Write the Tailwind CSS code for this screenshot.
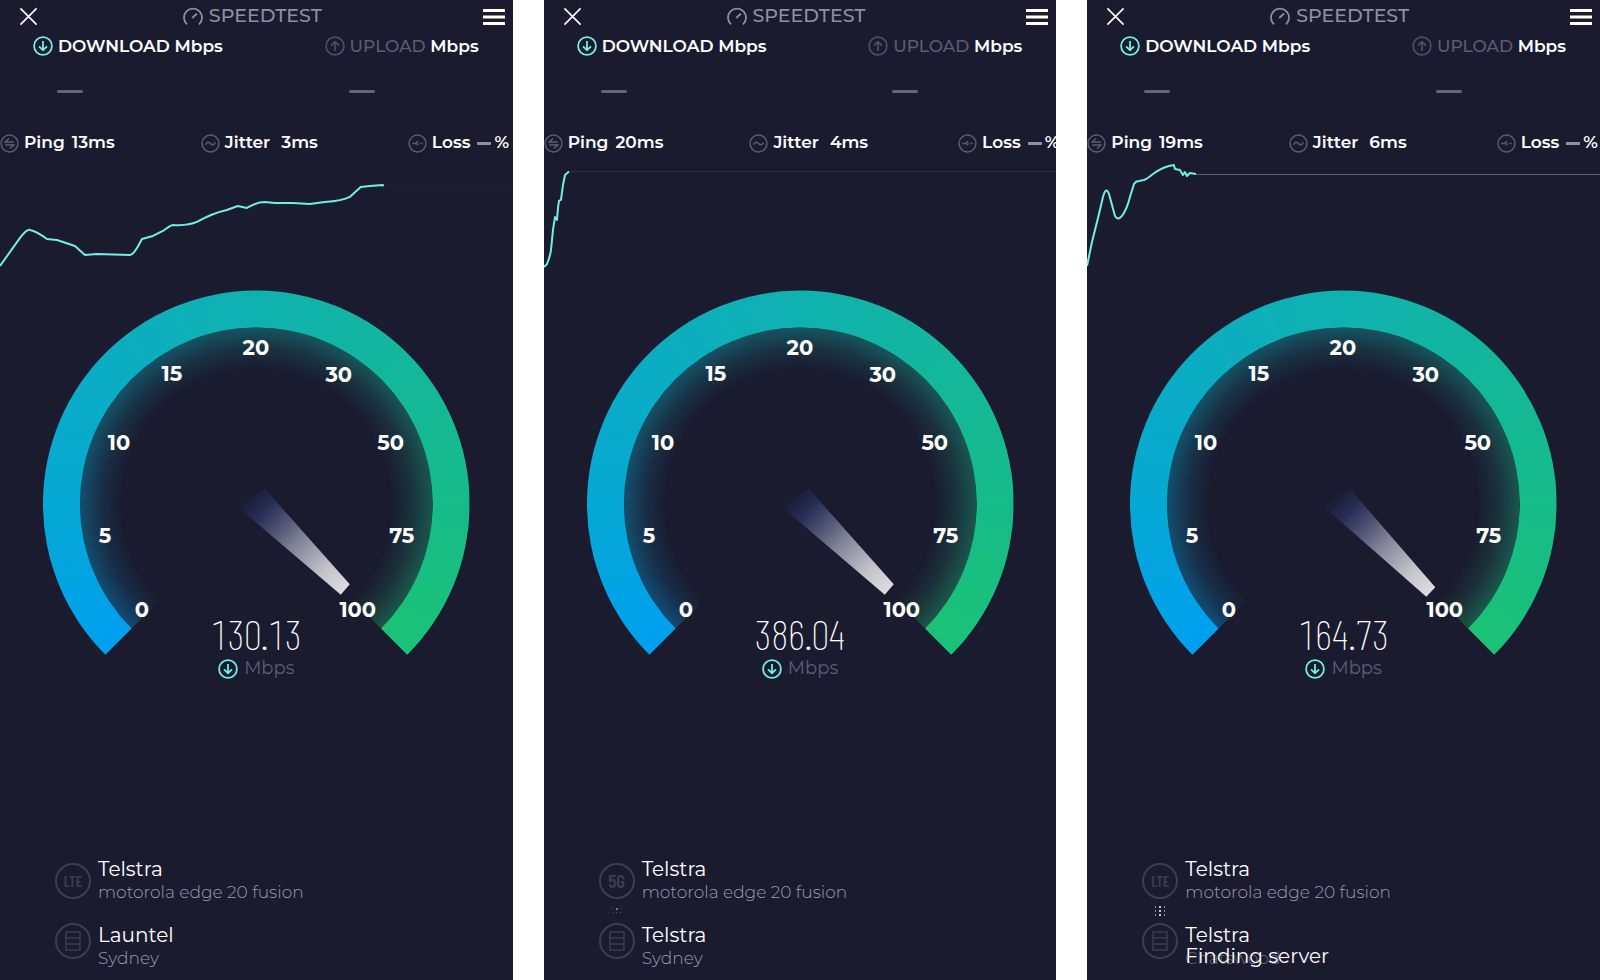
<!DOCTYPE html>
<html lang="en">

<head>
    <meta charset="UTF-8">
    <meta name="viewport" content="width=device-width, initial-scale=1.0">
    <title>Speedtest</title>
    <script src="https://cdn.jsdelivr.net/npm/@tailwindcss/browser@4"></script>
</head>

<body class="bg-white font-['Montserrat','Inter',sans-serif]">
    <!-- Shared icons and gradients -->
    <svg class="absolute size-0" aria-hidden="true">
        <defs>
            <linearGradient id="needleFill" gradientUnits="userSpaceOnUse" x1="246" y1="493" x2="346" y2="590">
                <stop offset="0" stop-color="#222a55" stop-opacity="0" />
                <stop offset="0.18" stop-color="#2a3360" stop-opacity="0.8" />
                <stop offset="0.5" stop-color="#7d7f95" />
                <stop offset="0.8" stop-color="#c4c4cc" />
                <stop offset="1" stop-color="#dcdce0" />
            </linearGradient>
            <clipPath id="ringClip">
                <path d="M105.5 655A213.5 213.5 0 1 1 407.5 655L381.3 628.8A176.5 176.5 0 1 0 131.7 628.8Z" />
            </clipPath>
            <clipPath id="glowClip">
                <path d="M256.5 504L131.7 628.8A176.5 176.5 0 1 1 381.3 628.8Z" />
            </clipPath>
            <g id="ticks" fill="#fff" font-size="21" font-weight="700" text-anchor="middle">
                <text x="142" y="617">0</text>
                <text x="105" y="543">5</text>
                <text x="119" y="450">10</text>
                <text x="172" y="381">15</text>
                <text x="256" y="355">20</text>
                <text x="339" y="382">30</text>
                <text x="391" y="450">50</text>
                <text x="402" y="543">75</text>
                <text x="358" y="617">100</text>
            </g>
        </defs>
        <symbol id="close" viewBox="0 0 20 20">
            <path d="M1.500 1.500L18.500 18.500M18.500 1.500L1.500 18.500" fill="none" stroke="currentColor" stroke-width="1.700" />
        </symbol>
        <symbol id="menu" viewBox="0 0 22 16">
            <path d="M0 1.500H22M0 8H22M0 14.500H22" fill="none" stroke="currentColor" stroke-width="2.800" />
        </symbol>
        <symbol id="logo" viewBox="0 0 20 20">
            <path d="M4 17.300A9 9 0 1 1 16 17.300M9.300 11L14 6.500" fill="none" stroke="currentColor" stroke-width="1.800" />
        </symbol>
        <symbol id="down" viewBox="0 0 20 20">
            <circle cx="10" cy="10" r="8.900" fill="none" stroke="currentColor" stroke-width="1.800" />
            <path d="M10 5V14M6 10.300L10 14.200L14 10.300" fill="none" stroke="currentColor" stroke-width="1.800" />
        </symbol>
        <symbol id="up" viewBox="0 0 20 20">
            <circle cx="10" cy="10" r="8.900" fill="none" stroke="currentColor" stroke-width="1.700" />
            <path d="M10 15V6M6 9.700L10 5.800L14 9.700" fill="none" stroke="currentColor" stroke-width="1.700" />
        </symbol>
        <symbol id="ping" viewBox="0 0 20 20">
            <circle cx="10" cy="10" r="8.900" fill="none" stroke="currentColor" stroke-width="1.500" />
            <path d="M14.500 8.500H5.500L9.500 4.800M5.500 11.500H14.500L10.500 15.200" fill="none" stroke="currentColor" stroke-width="1.500" />
        </symbol>
        <symbol id="jitter" viewBox="0 0 20 20">
            <circle cx="10" cy="10" r="8.900" fill="none" stroke="currentColor" stroke-width="1.500" />
            <path d="M4.800 11.300C6.500 7.800 8.300 8.200 10 10S13.500 12.200 15.200 8.700" fill="none" stroke="currentColor" stroke-width="1.500" />
        </symbol>
        <symbol id="loss" viewBox="0 0 20 20">
            <circle cx="10" cy="10" r="8.900" fill="none" stroke="currentColor" stroke-width="1.500" />
            <path d="M4.500 10H8L10.500 7.500M9.200 12L10.800 10M12.200 10H13.200M14.200 10H15.700" fill="none" stroke="currentColor" stroke-width="1.500" />
        </symbol>
        <symbol id="server" viewBox="0 0 16 20">
            <path d="M1 1H15V19H1ZM1 7H15M1 13H15" fill="none" stroke="currentColor" stroke-width="1.400" />
        </symbol>
    </svg>

    <main class="grid min-h-screen grid-cols-3 gap-[31px]">
        <!-- Test 1 -->
        <section class="flex min-w-0 flex-col overflow-hidden bg-[#1b1b2f] text-white">
            <header class="flex h-[33px] items-center justify-between pr-2 pl-[19px]">
                <button type="button" aria-label="Close"><svg class="size-[19px]"><use href="#close" /></svg></button>
                <h1 class="mr-4 flex items-center gap-[6px] text-[19px] font-medium text-[#8f8fa3]"><svg class="size-5"><use href="#logo" /></svg>SPEEDTEST</h1>
                <button type="button" aria-label="Menu"><svg class="h-4 w-[22px]"><use href="#menu" /></svg></button>
            </header>
            <div class="flex h-[98px] justify-between pr-[34px] pl-[33px] text-[17px] leading-[26px] font-semibold">
                <div>
                    <div class="flex items-center gap-[5px]"><svg class="size-5 text-[#72efe0]"><use href="#down" /></svg>DOWNLOAD Mbps</div>
                    <div class="mt-[31px] ml-6 h-[3px] w-[26px] rounded-full bg-[#65657a]"></div>
                </div>
                <div>
                    <div class="flex items-center gap-[5px]"><svg class="size-5 text-[#4e4e63]"><use href="#up" /></svg><span><span class="font-medium text-[#5d5d72]">UPLOAD</span> Mbps</span></div>
                    <div class="mt-[31px] ml-6 h-[3px] w-[26px] rounded-full bg-[#65657a]"></div>
                </div>
            </div>
            <div class="flex h-6 items-center text-[17px] font-semibold whitespace-nowrap">
                <div class="flex shrink-0 items-center"><svg class="mr-[5px] size-[19px] text-[#5d5d72]"><use href="#ping" /></svg>Ping<span class="ml-[7px]">13ms</span></div>
                <div class="ml-[86px] flex shrink-0 items-center"><svg class="mr-[5px] size-[19px] text-[#5d5d72]"><use href="#jitter" /></svg>Jitter<span class="ml-[11px]">3ms</span></div>
                <div class="ml-[90px] flex shrink-0 items-center"><svg class="mr-[5px] size-[19px] text-[#5d5d72]"><use href="#loss" /></svg>Loss<span class="mr-[3px] ml-[7px] h-[3px] w-[14px] bg-[#8f8fa3]"></span>%</div>
            </div>
            <svg class="w-full" viewBox="0 155 513 120" fill="none">
                <path d="M384 185.500H513" stroke="#222236" />
                <path d="M0 266L20 238Q27 229 30 230Q36 231 47 239L57 240L75 246L85 255L97 254L130 255Q134 255 142 239L153 236L163 231Q171 225 173 225Q188 226 197 222Q213 213 227 210L238 206L247 208Q257 202 265 202L275 203H293L310 204L325 202Q343 201 350 197L361 187L370 186L383 185L384 186" stroke="#72efe0" stroke-width="2" stroke-linejoin="round" />
            </svg>
            <div class="relative">
                <svg class="w-full" viewBox="0 275 513 407">
                    <g clip-path="url(#ringClip)"><foreignObject x="42" y="289.500" width="429" height="429"><div class="h-full bg-[conic-gradient(from_225deg,#00a0f0,#06a8d4_45deg,#10b2b0_135deg,#16bc86_230deg,#1bc275_270deg)]"></div></foreignObject></g>
                    <g clip-path="url(#glowClip)"><foreignObject x="80" y="327.500" width="353" height="353"><div class="h-full bg-[conic-gradient(from_225deg,#00a0f0,#06a8d4_45deg,#10b2b0_135deg,#16bc86_230deg,#1bc275_270deg)] [mask-image:radial-gradient(circle,transparent_134px,rgb(0_0_0/.14)_155px,rgb(0_0_0/.38)_177px)]"></div></foreignObject></g>
                    <use href="#ticks" />
                    <path d="M265 489L350 584.500L341 595L238 507Z" fill="url(#needleFill)" />
                </svg>
                <div class="absolute inset-x-0 bottom-0 flex flex-col items-center">
                    <div class="font-['Barlow_Condensed','Roboto_Condensed',sans-serif] text-[42px] leading-[46px] font-extralight tabular-nums">130.13</div>
                    <div class="flex h-[26px] items-center gap-[6px] text-[18px] text-[#5d5d72]"><svg class="size-5 text-[#72efe0]"><use href="#down" /></svg>Mbps</div>
                </div>
            </div>
            <div class="mt-auto flex gap-[7px] pb-[11px] pl-[55px]">
                <div class="flex flex-col items-center pt-[6px] text-[#3d3d50]">
                    <div class="flex size-9 items-center justify-center rounded-full border-2 border-current font-['Barlow_Condensed','Roboto_Condensed'] text-[15px] font-semibold">LTE</div>
                    <div class="mt-6 flex size-9 items-center justify-center rounded-full border-2 border-current"><svg class="h-5 w-4"><use href="#server" /></svg></div>
                </div>
                <div class="text-[17px] leading-[22px] font-light text-[#9a9aac]">
                    <h2 class="text-[20px] leading-6 font-normal text-white">Telstra</h2>
                    <p>motorola edge 20 fusion</p>
                    <h2 class="mt-5 text-[20px] leading-6 font-normal text-white">Launtel</h2>
                    <p>Sydney</p>
                </div>
            </div>
        </section>

        <!-- Test 2 -->
        <section class="flex min-w-0 flex-col overflow-hidden bg-[#1b1b2f] text-white">
            <header class="flex h-[33px] items-center justify-between pr-2 pl-[19px]">
                <button type="button" aria-label="Close"><svg class="size-[19px]"><use href="#close" /></svg></button>
                <h1 class="mr-4 flex items-center gap-[6px] text-[19px] font-medium text-[#8f8fa3]"><svg class="size-5"><use href="#logo" /></svg>SPEEDTEST</h1>
                <button type="button" aria-label="Menu"><svg class="h-4 w-[22px]"><use href="#menu" /></svg></button>
            </header>
            <div class="flex h-[98px] justify-between pr-[34px] pl-[33px] text-[17px] leading-[26px] font-semibold">
                <div>
                    <div class="flex items-center gap-[5px]"><svg class="size-5 text-[#72efe0]"><use href="#down" /></svg>DOWNLOAD Mbps</div>
                    <div class="mt-[31px] ml-6 h-[3px] w-[26px] rounded-full bg-[#65657a]"></div>
                </div>
                <div>
                    <div class="flex items-center gap-[5px]"><svg class="size-5 text-[#4e4e63]"><use href="#up" /></svg><span><span class="font-medium text-[#5d5d72]">UPLOAD</span> Mbps</span></div>
                    <div class="mt-[31px] ml-6 h-[3px] w-[26px] rounded-full bg-[#65657a]"></div>
                </div>
            </div>
            <div class="flex h-6 items-center text-[17px] font-semibold whitespace-nowrap">
                <div class="flex shrink-0 items-center"><svg class="mr-[5px] size-[19px] text-[#5d5d72]"><use href="#ping" /></svg>Ping<span class="ml-[7px]">20ms</span></div>
                <div class="ml-[86px] flex shrink-0 items-center"><svg class="mr-[5px] size-[19px] text-[#5d5d72]"><use href="#jitter" /></svg>Jitter<span class="ml-[11px]">4ms</span></div>
                <div class="ml-[90px] flex shrink-0 items-center"><svg class="mr-[5px] size-[19px] text-[#5d5d72]"><use href="#loss" /></svg>Loss<span class="mr-[3px] ml-[7px] h-[3px] w-[14px] bg-[#8f8fa3]"></span>%</div>
            </div>
            <svg class="w-full" viewBox="0 155 513 120" fill="none">
                <path d="M25 171.500H513" stroke="#303044" />
                <path d="M0 267L3 264Q6 257 7 250L9 230L11 217L13 220L14 208L15 201L17 200L19 185L21 175L25 171.500" stroke="#72efe0" stroke-width="2" stroke-linejoin="round" />
            </svg>
            <div class="relative">
                <svg class="w-full" viewBox="0 275 513 407">
                    <g clip-path="url(#ringClip)"><foreignObject x="42" y="289.500" width="429" height="429"><div class="h-full bg-[conic-gradient(from_225deg,#00a0f0,#06a8d4_45deg,#10b2b0_135deg,#16bc86_230deg,#1bc275_270deg)]"></div></foreignObject></g>
                    <g clip-path="url(#glowClip)"><foreignObject x="80" y="327.500" width="353" height="353"><div class="h-full bg-[conic-gradient(from_225deg,#00a0f0,#06a8d4_45deg,#10b2b0_135deg,#16bc86_230deg,#1bc275_270deg)] [mask-image:radial-gradient(circle,transparent_134px,rgb(0_0_0/.14)_155px,rgb(0_0_0/.38)_177px)]"></div></foreignObject></g>
                    <use href="#ticks" />
                    <path d="M265 489L350 584.500L341 595L238 507Z" fill="url(#needleFill)" />
                </svg>
                <div class="absolute inset-x-0 bottom-0 flex flex-col items-center">
                    <div class="font-['Barlow_Condensed','Roboto_Condensed',sans-serif] text-[42px] leading-[46px] font-extralight tabular-nums">386.04</div>
                    <div class="flex h-[26px] items-center gap-[6px] text-[18px] text-[#5d5d72]"><svg class="size-5 text-[#72efe0]"><use href="#down" /></svg>Mbps</div>
                </div>
            </div>
            <div class="mt-auto flex gap-[7px] pb-[11px] pl-[55px]">
                <div class="flex flex-col items-center pt-[6px] text-[#3d3d50]">
                    <div class="flex size-9 items-center justify-center rounded-full border-2 border-current font-['Barlow_Condensed','Roboto_Condensed'] text-[19px] font-semibold">5G</div>
                    <svg class="my-[6px] h-3 w-3" viewBox="0 0 12 12" fill="#77778a"><path d="M5 3h2v2H5z" /><path d="M1 3h1v1H1zM10 3h1v1h-1zM2 7h1v1H2zM5 7h1v1H5zM9 7h1v1H9z" opacity="0.600" /></svg>
                    <div class="flex size-9 items-center justify-center rounded-full border-2 border-current"><svg class="h-5 w-4"><use href="#server" /></svg></div>
                </div>
                <div class="text-[17px] leading-[22px] font-light text-[#9a9aac]">
                    <h2 class="text-[20px] leading-6 font-normal text-white">Telstra</h2>
                    <p>motorola edge 20 fusion</p>
                    <h2 class="mt-5 text-[20px] leading-6 font-normal text-white">Telstra</h2>
                    <p>Sydney</p>
                </div>
            </div>
        </section>

        <!-- Test 3 -->
        <section class="flex min-w-0 flex-col overflow-hidden bg-[#1b1b2f] text-white">
            <header class="flex h-[33px] items-center justify-between pr-2 pl-[19px]">
                <button type="button" aria-label="Close"><svg class="size-[19px]"><use href="#close" /></svg></button>
                <h1 class="mr-4 flex items-center gap-[6px] text-[19px] font-medium text-[#8f8fa3]"><svg class="size-5"><use href="#logo" /></svg>SPEEDTEST</h1>
                <button type="button" aria-label="Menu"><svg class="h-4 w-[22px]"><use href="#menu" /></svg></button>
            </header>
            <div class="flex h-[98px] justify-between pr-[34px] pl-[33px] text-[17px] leading-[26px] font-semibold">
                <div>
                    <div class="flex items-center gap-[5px]"><svg class="size-5 text-[#72efe0]"><use href="#down" /></svg>DOWNLOAD Mbps</div>
                    <div class="mt-[31px] ml-6 h-[3px] w-[26px] rounded-full bg-[#65657a]"></div>
                </div>
                <div>
                    <div class="flex items-center gap-[5px]"><svg class="size-5 text-[#4e4e63]"><use href="#up" /></svg><span><span class="font-medium text-[#5d5d72]">UPLOAD</span> Mbps</span></div>
                    <div class="mt-[31px] ml-6 h-[3px] w-[26px] rounded-full bg-[#65657a]"></div>
                </div>
            </div>
            <div class="flex h-6 items-center text-[17px] font-semibold whitespace-nowrap">
                <div class="flex shrink-0 items-center"><svg class="mr-[5px] size-[19px] text-[#5d5d72]"><use href="#ping" /></svg>Ping<span class="ml-[7px]">19ms</span></div>
                <div class="ml-[86px] flex shrink-0 items-center"><svg class="mr-[5px] size-[19px] text-[#5d5d72]"><use href="#jitter" /></svg>Jitter<span class="ml-[11px]">6ms</span></div>
                <div class="ml-[90px] flex shrink-0 items-center"><svg class="mr-[5px] size-[19px] text-[#5d5d72]"><use href="#loss" /></svg>Loss<span class="mr-[3px] ml-[7px] h-[3px] w-[14px] bg-[#8f8fa3]"></span>%</div>
            </div>
            <svg class="w-full" viewBox="0 155 513 120" fill="none">
                <path d="M109 174.500H513" stroke="#626276" />
                <path d="M0 266L5 242L11 218L16 197Q19 186 22 194L28 216Q31 221 35 216Q40 209 43 197L47 184Q49 181 52 181L57 180Q60 179 66 174Q77 166 87 165L88 169L93 170L96 175L98 172L100 176L103 173L109 174" stroke="#72efe0" stroke-width="2" stroke-linejoin="round" />
            </svg>
            <div class="relative">
                <svg class="w-full" viewBox="0 275 513 407">
                    <g clip-path="url(#ringClip)"><foreignObject x="42" y="289.500" width="429" height="429"><div class="h-full bg-[conic-gradient(from_225deg,#00a0f0,#06a8d4_45deg,#10b2b0_135deg,#16bc86_230deg,#1bc275_270deg)]"></div></foreignObject></g>
                    <g clip-path="url(#glowClip)"><foreignObject x="80" y="327.500" width="353" height="353"><div class="h-full bg-[conic-gradient(from_225deg,#00a0f0,#06a8d4_45deg,#10b2b0_135deg,#16bc86_230deg,#1bc275_270deg)] [mask-image:radial-gradient(circle,transparent_134px,rgb(0_0_0/.14)_155px,rgb(0_0_0/.38)_177px)]"></div></foreignObject></g>
                    <use href="#ticks" />
                    <path d="M263 489L348.500 587.500L339.500 597L236 506Z" fill="url(#needleFill)" />
                </svg>
                <div class="absolute inset-x-0 bottom-0 flex flex-col items-center">
                    <div class="font-['Barlow_Condensed','Roboto_Condensed',sans-serif] text-[42px] leading-[46px] font-extralight tabular-nums">164.73</div>
                    <div class="flex h-[26px] items-center gap-[6px] text-[18px] text-[#5d5d72]"><svg class="size-5 text-[#72efe0]"><use href="#down" /></svg>Mbps</div>
                </div>
            </div>
            <div class="mt-auto flex gap-[7px] pb-[11px] pl-[55px]">
                <div class="flex flex-col items-center pt-[6px] text-[#3d3d50]">
                    <div class="flex size-9 items-center justify-center rounded-full border-2 border-current font-['Barlow_Condensed','Roboto_Condensed'] text-[15px] font-semibold">LTE</div>
                    <svg class="my-[6px] h-3 w-3" viewBox="0 0 12 12" fill="#c8c8d2"><path d="M5 1h2v2H5zM5 5h2v2H5zM5 9h2v2H5z" /><path d="M1 1h1v2H1zM1 5h1v2H1zM1 9h1v2H1zM10 1h1v2h-1zM10 5h1v2h-1zM10 9h1v2h-1z" opacity="0.700" /></svg>
                    <div class="flex size-9 items-center justify-center rounded-full border-2 border-current"><svg class="h-5 w-4"><use href="#server" /></svg></div>
                </div>
                <div class="text-[17px] leading-[22px] font-light text-[#9a9aac]">
                    <h2 class="text-[20px] leading-6 font-normal text-white">Telstra</h2>
                    <p>motorola edge 20 fusion</p>
                    <h2 class="mt-5 text-[20px] leading-6 font-normal text-white">Telstra</h2>
                    <div class="relative">
                        <p class="text-[#6a6a7e]">Chatswood</p>
                        <p class="absolute bottom-px left-0 text-[20px] leading-6 font-normal whitespace-nowrap text-white">Finding server</p>
                    </div>
                </div>
            </div>
        </section>
    </main>
</body>

</html>
